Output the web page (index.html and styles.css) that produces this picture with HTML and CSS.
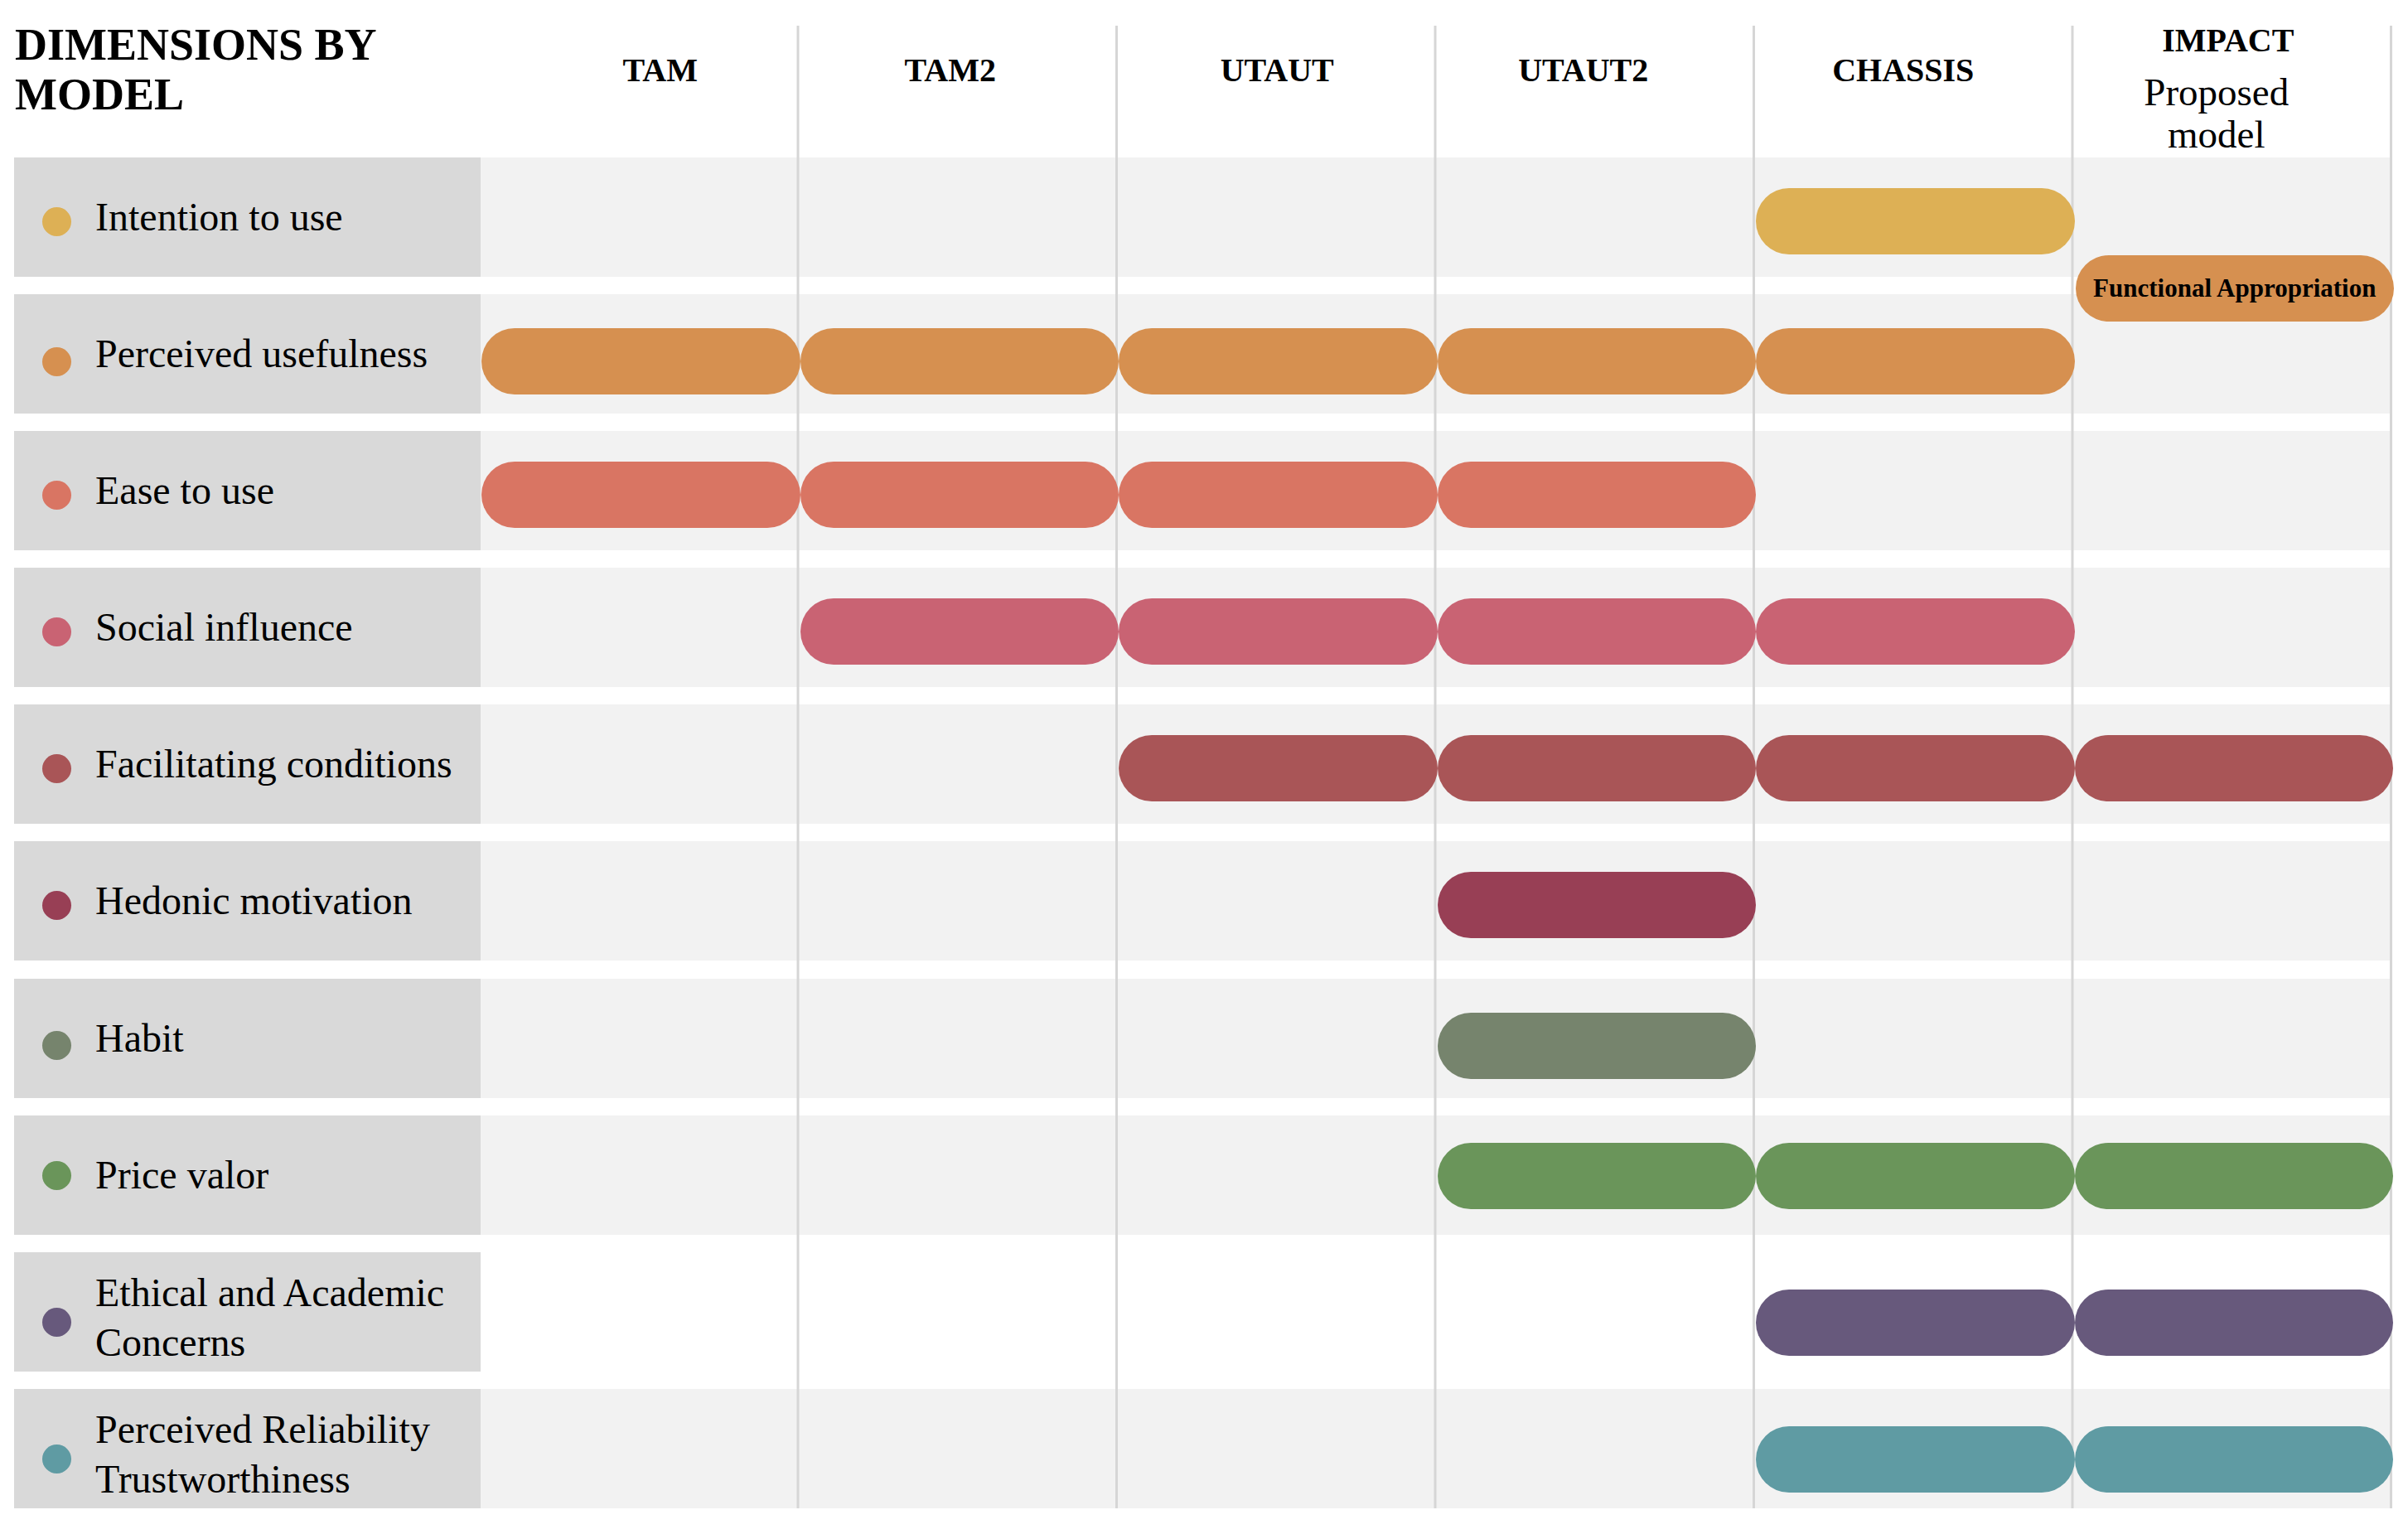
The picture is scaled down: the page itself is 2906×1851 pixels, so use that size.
FILE: index.html
```html
<!DOCTYPE html>
<html lang="en">
<head>
<meta charset="utf-8">
<title>Dimensions by model</title>
<link rel="stylesheet" href="styles.css">
</head>
<body>
<div class="chart">
  <div class="head">
    <div class="title">DIMENSIONS BY<br>MODEL</div>
    <div class="hcell hcell--tam">TAM</div>
    <div class="hcell hcell--tam2">TAM2</div>
    <div class="hcell">UTAUT</div>
    <div class="hcell hcell--utaut2">UTAUT2</div>
    <div class="hcell hcell--chassis">CHASSIS</div>
    <div class="hcell hcell--impact">IMPACT<span class="impact-sub">Proposed<br>model</span></div>
  </div>

  <div class="rows">
    <div class="row row--intent">
      <div class="label"><span class="dot"></span><span class="name">Intention to use</span></div>
      <div class="track">
        <div class="pill c5"></div>
        <div class="cell-overlay c6"><div class="pill pill--tag">Functional Appropriation</div></div>
      </div>
    </div>

    <div class="row row--useful row--s9">
      <div class="label"><span class="dot"></span><span class="name">Perceived usefulness</span></div>
      <div class="track">
        <div class="pill c1"></div>
        <div class="pill c2"></div>
        <div class="pill c3"></div>
        <div class="pill c4"></div>
        <div class="pill c5"></div>
      </div>
    </div>

    <div class="row row--ease">
      <div class="label"><span class="dot"></span><span class="name">Ease to use</span></div>
      <div class="track">
        <div class="pill c1"></div>
        <div class="pill c2"></div>
        <div class="pill c3"></div>
        <div class="pill c4"></div>
      </div>
    </div>

    <div class="row row--social">
      <div class="label"><span class="dot"></span><span class="name">Social influence</span></div>
      <div class="track">
        <div class="pill c2"></div>
        <div class="pill c3"></div>
        <div class="pill c4"></div>
        <div class="pill c5"></div>
      </div>
    </div>

    <div class="row row--facil">
      <div class="label"><span class="dot"></span><span class="name">Facilitating conditions</span></div>
      <div class="track">
        <div class="pill c3"></div>
        <div class="pill c4"></div>
        <div class="pill c5"></div>
        <div class="pill c6"></div>
      </div>
    </div>

    <div class="row row--hedonic">
      <div class="label"><span class="dot"></span><span class="name">Hedonic motivation</span></div>
      <div class="track">
        <div class="pill c4"></div>
      </div>
    </div>

    <div class="row row--habit row--s9">
      <div class="label"><span class="dot"></span><span class="name">Habit</span></div>
      <div class="track">
        <div class="pill c4"></div>
      </div>
    </div>

    <div class="row row--price row--s1">
      <div class="label"><span class="dot"></span><span class="name">Price valor</span></div>
      <div class="track">
        <div class="pill c4"></div>
        <div class="pill c5"></div>
        <div class="pill c6"></div>
      </div>
    </div>

    <div class="row row--ethic row--s13 row--two row--blank">
      <div class="label"><span class="dot"></span><span class="name">Ethical and Academic<br>Concerns</span></div>
      <div class="track">
        <div class="pill c5"></div>
        <div class="pill c6"></div>
      </div>
    </div>

    <div class="row row--trust row--s13 row--two">
      <div class="label"><span class="dot"></span><span class="name">Perceived Reliability<br>Trustworthiness</span></div>
      <div class="track">
        <div class="pill c5"></div>
        <div class="pill c6"></div>
      </div>
    </div>
  </div>
</div>
</body>
</html>
```

FILE: styles.css
```css
:root {
  --line: #d6d6d6;
  --pitch: 384.5px;
  --label-w: 563px;
}

html, body {
  margin: 0;
  background: #ffffff;
}

body {
  font-family: "Liberation Serif", "DejaVu Serif", serif;
  color: #000000;
}

.chart {
  margin-left: 17px;
  width: calc(var(--label-w) + 6 * var(--pitch));
  background:
    linear-gradient(#ffffff, #ffffff) 0 0 / var(--label-w) 100% no-repeat,
    linear-gradient(90deg, transparent 0 382px, var(--line) 382px) var(--label-w) 31px / var(--pitch) calc(100% - 31px) repeat-x;
}

/* ---------- header ---------- */
.head {
  display: grid;
  grid-template-columns: var(--label-w) repeat(6, var(--pitch));
  height: 190px;
}

.title {
  font-weight: bold;
  font-size: 54px;
  line-height: 60px;
  padding-top: 24px;
  padding-left: 1px;
}

.hcell {
  text-align: center;
  font-weight: bold;
  font-size: 40px;
  line-height: 40px;
  padding-top: 64.5px;
}

.hcell--tam { padding-left: 49px; }
.hcell--tam2 { padding-right: 20px; }
.hcell--utaut2 { padding-right: 30px; }
.hcell--chassis { padding-right: 27px; }
.hcell--impact {
  padding-top: 28.5px;
  padding-right: 12px;
}

.impact-sub {
  display: block;
  font-weight: normal;
  font-size: 47px;
  line-height: 51px;
  margin-top: 17px;
  padding-right: 28px;
}

/* ---------- rows ---------- */
.rows {
  display: flex;
  flex-direction: column;
  gap: 21.1px;
}

.row {
  --shift: 5px;
  display: grid;
  grid-template-columns: var(--label-w) 1fr;
  height: 144px;
}

.row--s9 { --shift: 9px; }
.row--s1 { --shift: 1px; }
.row--s13 { --shift: 13px; }

.label {
  background: #d9d9d9;
  display: flex;
  align-items: center;
  padding-left: 34px;
}

.dot {
  flex: none;
  width: 35px;
  height: 35px;
  border-radius: 50%;
  background: var(--c);
  margin-top: calc(var(--shift) * 2);
  margin-right: 29px;
}

.name {
  font-size: 48px;
  line-height: 60px;
}

.row--two .name {
  padding-top: 14px;
}

.track {
  display: grid;
  grid-template-columns: repeat(6, var(--pitch));
  align-items: center;
  padding-top: calc(var(--shift) * 2);
  background:
    linear-gradient(90deg, transparent 0 382px, var(--line) 382px) 0 0 / var(--pitch) 100% repeat-x,
    #f2f2f2;
}

.row--blank .track {
  background-color: #ffffff;
}

.pill {
  grid-row: 1;
  height: 80px;
  border-radius: 40px;
  margin: 0 -1px 0 1px;
  background: var(--c);
}

.c1 { grid-column: 1; }
.c2 { grid-column: 2; }
.c3 { grid-column: 3; }
.c4 { grid-column: 4; }
.c5 { grid-column: 5; }
.c6 { grid-column: 6; }

.cell-overlay {
  grid-row: 1;
  align-self: start;
  position: relative;
}

.pill--tag {
  position: absolute;
  top: 108px;
  left: 2px;
  right: -2px;
  margin: 0;
  background: #d69050;
  display: flex;
  align-items: center;
  justify-content: center;
  font-weight: bold;
  font-size: 31px;
  white-space: nowrap;
  z-index: 1;
}

/* ---------- dimension colours ---------- */
.row--intent { --c: #ddb055; }
.row--useful { --c: #d69050; }
.row--ease { --c: #d97563; }
.row--social { --c: #c96373; }
.row--facil { --c: #a95557; }
.row--hedonic { --c: #983f55; }
.row--habit { --c: #76846d; }
.row--price { --c: #6a955a; }
.row--ethic { --c: #67597c; }
.row--trust { --c: #5f9ba3; }
```
